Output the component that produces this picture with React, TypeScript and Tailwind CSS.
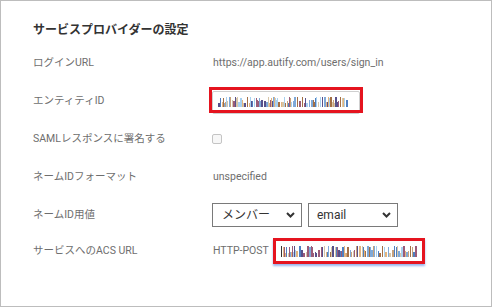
import React from 'react';

const palette = ['#a8d0f0', '#e3b47e', '#a36f45', '#57508a', '#9b5b78', '#4f7fc0', '#c9a27a', '#7fa9d8', '#d7c6a8'];

function Redacted({ width, height, seed }: { width: number; height: number; seed: number }) {
  // pseudo-random bar pattern standing in for blurred text
  let s = seed;
  const rnd = () => {
    s = (s * 9301 + 49297) % 233280;
    return s / 233280;
  };
  const bars: { x: number; w: number; h: number; c: string }[] = [];
  let x = 0;
  while (x < width) {
    const w = rnd() < 0.7 ? 1 : 2;
    const tall = rnd() < 0.45;
    const h = tall ? height - Math.floor(rnd() * 2) : 4 + Math.floor(rnd() * 4);
    bars.push({ x, w, h, c: palette[Math.floor(rnd() * palette.length)] });
    x += w + (rnd() < 0.3 ? 1 : 0);
  }
  return (
    <svg width={width} height={height} className="block">
      {bars.map((b, i) => (
        <rect key={i} x={b.x} y={height - b.h} width={b.w} height={b.h} fill={b.c} />
      ))}
    </svg>
  );
}

function Chevron() {
  return (
    <svg width="9" height="6" viewBox="0 0 9 6" className="block">
      <path d="M1 1 L4.5 4.5 L8 1" fill="none" stroke="#333" strokeWidth="2" />
    </svg>
  );
}

function Row({ label, children, last }: { label: string; children: React.ReactNode; last?: boolean }) {
  return (
    <div className={`flex items-center ${last ? 'h-[34px]' : 'h-[38px]'}`}>
      <div className="w-[180px] shrink-0 text-[10.5px] text-[#6e6e6e]">{label}</div>
      <div className="flex items-center text-[10.5px] text-[#6e6e6e]">{children}</div>
    </div>
  );
}

export default function App() {
  return (
    <div className="h-[308px] w-[498px] bg-white font-['Roboto','Noto_Sans_CJK_JP',sans-serif]">
      <div className="h-[307px] w-[492px] border border-[#bdbdbd] pl-[32px] pt-[20px]">
        <h1 className="h-[18px] text-[12px] font-bold leading-[18px] text-[#333]">サービスプロバイダーの設定</h1>
        <div className="mt-[5px] flex flex-col">
          <Row label="ログインURL">https://app.autify.com/users/sign_in</Row>
          <Row label="エンティティID">
            <div className="relative -ml-[1px] mt-[2px] flex h-[23px] w-[148px] items-center rounded-[2px] border border-[#cfcfcf] pl-[5px]">
              <Redacted width={130} height={10} seed={17} />
              <div className="absolute -left-[4px] -top-[5px] h-[26px] w-[154px] border-[3px] border-[#e5141f]" />
            </div>
          </Row>
          <Row label="SAMLレスポンスに署名する">
            <div className="-ml-[1px] h-[10px] w-[10px] rounded-[2px] border border-[#c4c4c4] bg-[#f7f7f7]" />
          </Row>
          <Row label="ネームIDフォーマット">unspecified</Row>
          <Row label="ネームID用値">
            <div className="-ml-[1px] flex gap-[6px] text-[12px] text-[#333]">
              <div className="flex h-[24px] w-[90px] items-center justify-between border border-[#7a7a7a] pl-[9px] pr-[6px]">
                <span>メンバー</span>
                <Chevron />
              </div>
              <div className="flex h-[24px] w-[90px] items-center justify-between border border-[#7a7a7a] pl-[8px] pr-[6px]">
                <span>email</span>
                <Chevron />
              </div>
            </div>
          </Row>
          <Row label="サービスへのACS URL" last>
            <span>HTTP-POST</span>
            <div className="relative ml-[4px] flex h-[26px] w-[152px] items-center bg-white pl-[8px] shadow-[0_2px_2px_rgba(70,120,220,0.55)]">
              <div className="mr-[1px] h-[11px] w-[1px] bg-[#333]" />
              <Redacted width={134} height={11} seed={53} />
              <div className="absolute inset-0 border-[3px] border-[#e5141f]" />
            </div>
          </Row>
        </div>
      </div>
    </div>
  );
}
